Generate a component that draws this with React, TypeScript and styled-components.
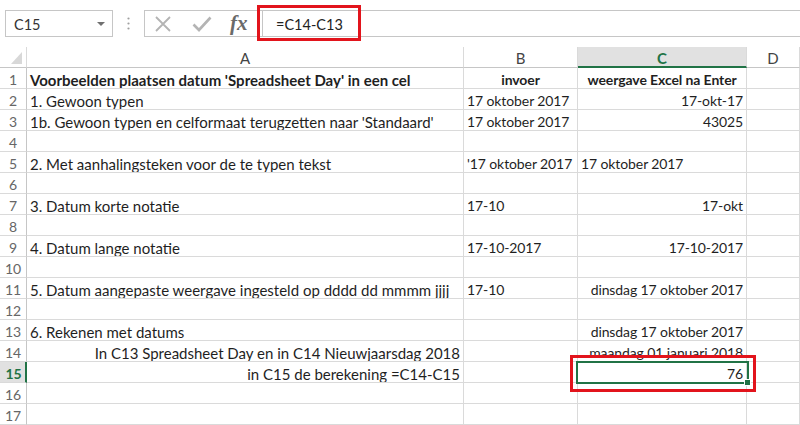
import React from 'react'
import styled, { createGlobalStyle } from 'styled-components'

// Excel-achtige weergave: formulebalk bovenaan, daaronder het werkblad
const GlobalStyle = createGlobalStyle`
  html, body {
    margin: 0;
    padding: 0;
    background: #fff;
  }
  body {
    font-family: Lato, "Liberation Sans", sans-serif;
  }
`

const GREEN = '#217346'
const GRID = '#dadada'

const Page = styled.div`
  width: 800px;
  height: 425px;
  overflow: hidden;
  background: #fff;
  color: #1f1f1f;
`

const Toolbar = styled.div`
  display: flex;
  align-items: center;
  height: 47px;
  padding: 10px 0 10px 5px;
  box-sizing: border-box;
`

const NameBox = styled.div`
  display: flex;
  align-items: center;
  justify-content: space-between;
  width: 108px;
  height: 27px;
  box-sizing: border-box;
  border: 1px solid #c6c6c6;
  padding: 1px 7px 0 8px;
  font-size: 14.5px;
  color: #333;
`

const DropArrow = styled.span`
  width: 0;
  height: 0;
  border-left: 4px solid transparent;
  border-right: 4px solid transparent;
  border-top: 4px solid #707070;
`

const Grip = styled.div`
  display: flex;
  justify-content: center;
  width: 31px;
`

const FormulaBox = styled.div`
  flex: 1;
  display: flex;
  height: 27px;
  box-sizing: border-box;
  border: 1px solid #c6c6c6;
  border-right: none;
`

const FxButtons = styled.div`
  display: flex;
  align-items: center;
  width: 117px;
  padding-left: 9px;
  box-sizing: border-box;
  gap: 20px;
`

const FxLabel = styled.span`
  font-family: "Liberation Serif", "DejaVu Serif", serif;
  font-style: italic;
  font-weight: 700;
  font-size: 21px;
  color: #6a6a6a;
  margin-left: -2px;
  line-height: 1;
`

const FormulaInput = styled.div`
  position: relative;
  flex: 1;
  display: flex;
  align-items: center;
  border-left: 1px solid #c6c6c6;
  padding: 1px 0 0 13px;
  font-size: 14.5px;
  color: #222;
`

const Callout = styled.div`
  position: absolute;
  box-sizing: border-box;
  border: 3px solid #e2141c;
  pointer-events: none;
  z-index: 3;
`

const FormulaCallout = styled(Callout)`
  left: -6px;
  top: -6px;
  width: 104px;
  height: 36px;
`

const CellCallout = styled(Callout)`
  left: -8px;
  top: -7px;
  right: -10px;
  bottom: -10px;
`

const Sheet = styled.div`
  display: grid;
  grid-template-columns: 27px 437px 114px 169px 53px;
  grid-auto-rows: 21px;
`

const Corner = styled.div`
  display: flex;
  align-items: flex-end;
  justify-content: flex-end;
  padding: 0 4px 3px 0;
  box-sizing: border-box;
  border-right: 1px solid ${GRID};
  border-bottom: 1px solid #c6c6c6;
`

const ColHead = styled.div<{ $active?: boolean }>`
  display: flex;
  align-items: center;
  justify-content: center;
  box-sizing: border-box;
  font-size: 15px;
  border-right: 1px solid ${GRID};
  border-bottom: ${(p) => (p.$active ? `2px solid ${GREEN}` : '1px solid #c6c6c6')};
  background: ${(p) => (p.$active ? '#e1e1e1' : '#fff')};
  color: ${(p) => (p.$active ? GREEN : '#444')};
  font-weight: ${(p) => (p.$active ? 700 : 400)};
  padding-top: ${(p) => (p.$active ? '2px' : '1px')};
`

const RowHead = styled.div<{ $active?: boolean }>`
  display: flex;
  align-items: center;
  justify-content: center;
  box-sizing: border-box;
  font-size: 14px;
  padding-top: 3px;
  border-bottom: 1px solid ${GRID};
  border-right: ${(p) => (p.$active ? `2px solid ${GREEN}` : '1px solid #c6c6c6')};
  background: ${(p) => (p.$active ? '#e1e1e1' : '#fff')};
  color: ${(p) => (p.$active ? GREEN : '#666')};
  font-weight: ${(p) => (p.$active ? 700 : 400)};
  padding-left: ${(p) => (p.$active ? '2px' : '0')};
`

type Align = 'left' | 'center' | 'right'

// kolom A krijgt de volle grootte, B en C (met veel cijfers) iets kleiner
const Cell = styled.div<{ $align?: Align; $bold?: boolean; $selected?: boolean; $small?: boolean }>`
  position: relative;
  box-sizing: border-box;
  border-right: 1px solid ${GRID};
  border-bottom: 1px solid ${GRID};
  padding: 3px 3px 0 3px;
  font-size: ${(p) => (p.$small ? '14px' : '15px')};
  letter-spacing: ${(p) => (p.$small ? '-0.1px' : '0')};
  line-height: 18px;
  white-space: nowrap;
  overflow: ${(p) => (p.$selected ? 'visible' : 'hidden')};
  text-align: ${(p) => p.$align ?? 'left'};
  font-weight: ${(p) => (p.$bold ? 700 : 400)};
`

const Selection = styled.div`
  position: absolute;
  left: -2px;
  right: -3px;
  top: -1px;
  bottom: -2px;
  border: 2px solid ${GREEN};
  z-index: 2;
`

const FillHandle = styled.span`
  position: absolute;
  right: -4px;
  bottom: -4px;
  width: 5px;
  height: 5px;
  background: ${GREEN};
  border: 1px solid #fff;
`

type CellData = { text: string; align?: Align; bold?: boolean }

type RowData = {
  a?: CellData
  b?: CellData
  c?: CellData
}

const rows: RowData[] = [
  {
    a: { text: "Voorbeelden plaatsen datum 'Spreadsheet Day' in een cel", bold: true },
    b: { text: 'invoer', bold: true, align: 'center' },
    c: { text: 'weergave Excel na Enter', bold: true, align: 'center' },
  },
  {
    a: { text: '1. Gewoon typen' },
    b: { text: '17 oktober 2017' },
    c: { text: '17-okt-17', align: 'right' },
  },
  {
    a: { text: "1b. Gewoon typen en celformaat terugzetten naar 'Standaard'" },
    b: { text: '17 oktober 2017' },
    c: { text: '43025', align: 'right' },
  },
  {},
  {
    a: { text: '2. Met aanhalingsteken voor de te typen tekst' },
    b: { text: "'17 oktober 2017" },
    c: { text: '17 oktober 2017' },
  },
  {},
  {
    a: { text: '3. Datum korte notatie' },
    b: { text: '17-10' },
    c: { text: '17-okt', align: 'right' },
  },
  {},
  {
    a: { text: '4. Datum lange notatie' },
    b: { text: '17-10-2017' },
    c: { text: '17-10-2017', align: 'right' },
  },
  {},
  {
    a: { text: '5. Datum aangepaste weergave ingesteld op dddd dd mmmm jjjj' },
    b: { text: '17-10' },
    c: { text: 'dinsdag 17 oktober 2017', align: 'right' },
  },
  {},
  {
    a: { text: '6. Rekenen met datums' },
    c: { text: 'dinsdag 17 oktober 2017', align: 'right' },
  },
  {
    a: { text: 'In C13 Spreadsheet Day en in C14 Nieuwjaarsdag 2018', align: 'right' },
    c: { text: 'maandag 01 januari 2018', align: 'right' },
  },
  {
    a: { text: 'in C15 de berekening =C14-C15', align: 'right' },
    c: { text: '76', align: 'right' },
  },
  {},
  {},
]

const ACTIVE_ROW = 15

const CancelIcon = () => (
  <svg width="18" height="18" viewBox="0 0 18 18">
    <path d="M2 2 L16 16 M16 2 L2 16" stroke="#b4b4b4" strokeWidth="1.8" fill="none" />
  </svg>
)

const EnterIcon = () => (
  <svg width="20" height="16" viewBox="0 0 20 16">
    <path d="M1.5 8.5 L7 14 L18.5 1.5" stroke="#b4b4b4" strokeWidth="2.6" fill="none" />
  </svg>
)

const GripIcon = () => (
  <svg width="3" height="13" viewBox="0 0 3 13">
    <circle cx="1.5" cy="1.5" r="1.1" fill="#a0a0a0" />
    <circle cx="1.5" cy="6.5" r="1.1" fill="#a0a0a0" />
    <circle cx="1.5" cy="11.5" r="1.1" fill="#a0a0a0" />
  </svg>
)

const CornerIcon = () => (
  <svg width="11" height="12" viewBox="0 0 11 12">
    <polygon points="11,0 11,12 0,12" fill="#d8d8d8" />
  </svg>
)

type DataCellProps = { data?: CellData; selected?: boolean; small?: boolean }

const DataCell = ({ data, selected, small }: DataCellProps) => (
  <Cell $align={data?.align} $bold={data?.bold} $selected={selected} $small={small}>
    {data?.text}
    {selected && (
      <>
        <Selection>
          <FillHandle />
        </Selection>
        <CellCallout />
      </>
    )}
  </Cell>
)

const App = (): JSX.Element => {
  return (
    <Page>
      <GlobalStyle />
      <Toolbar>
        <NameBox>
          <span>C15</span>
          <DropArrow />
        </NameBox>
        <Grip>
          <GripIcon />
        </Grip>
        <FormulaBox>
          <FxButtons>
            <CancelIcon />
            <EnterIcon />
            <FxLabel>fx</FxLabel>
          </FxButtons>
          <FormulaInput>
            =C14-C13
            <FormulaCallout />
          </FormulaInput>
        </FormulaBox>
      </Toolbar>
      <Sheet>
        <Corner>
          <CornerIcon />
        </Corner>
        <ColHead>A</ColHead>
        <ColHead>B</ColHead>
        <ColHead $active>C</ColHead>
        <ColHead>D</ColHead>
        {rows.map((row, i) => {
          const n = i + 1
          const active = n === ACTIVE_ROW
          return (
            <React.Fragment key={n}>
              <RowHead $active={active}>{n}</RowHead>
              <DataCell data={row.a} />
              <DataCell data={row.b} small />
              <DataCell data={row.c} small selected={active} />
              <DataCell />
            </React.Fragment>
          )
        })}
      </Sheet>
    </Page>
  )
}

export default App
